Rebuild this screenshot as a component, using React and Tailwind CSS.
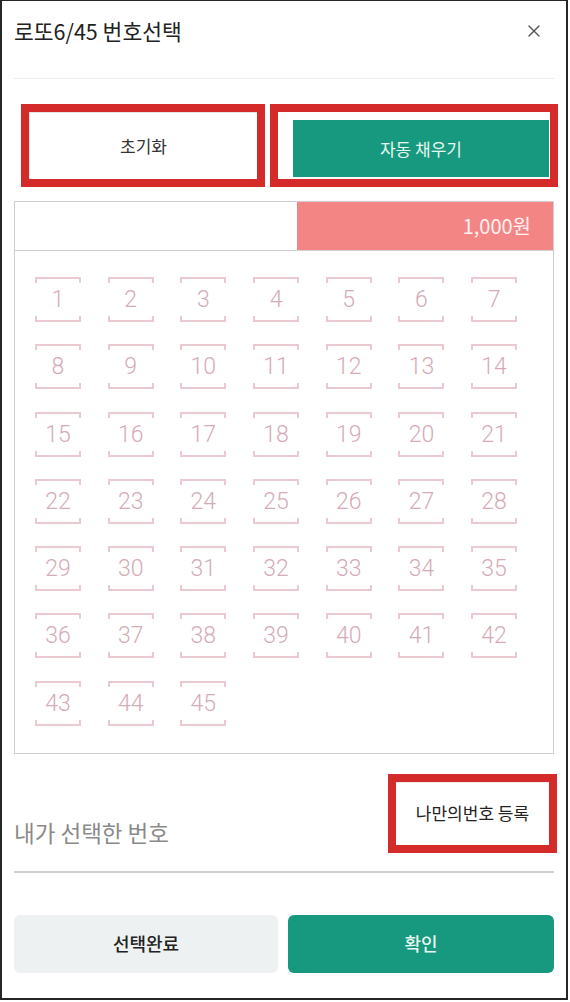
import React from 'react';
import { X } from 'lucide-react';

const numbers = Array.from({ length: 45 }, (_, i) => i + 1);

function NumberCell({ n }) {
  return (
    <div className="flex flex-col h-[45px] w-[46px]">
      <div className="h-[6px] border-t-2 border-x-2 border-[#ebc9d1]" />
      <div className="flex-1 flex items-center justify-center text-[23px] font-light text-[#d5abb7] font-['Roboto',sans-serif] leading-none">
        {n}
      </div>
      <div className="h-[6px] border-b-2 border-x-2 border-[#ebc9d1]" />
    </div>
  );
}

export default function App() {
  return (
    <div className="w-[570px] h-[1002px] bg-white font-['Noto_Sans_CJK_KR','Noto_Sans',sans-serif]">
      <div className="w-[568px] h-[1000px] border-x-2 border-t border-b-2 border-[#262626] px-[12px] flex flex-col">
        {/* header */}
        <div className="h-[60px] flex items-center justify-between">
          <h1 className="text-[21.5px] font-normal text-[#222]">로또6/45 번호선택</h1>
          <X className="w-[20px] h-[20px] text-[#555] mr-[10px]" strokeWidth={1.6} />
        </div>
        <div className="mt-[17px] h-px bg-[#ededed]" />

        {/* reset / auto fill */}
        <div className="mt-[25px] flex pl-[7px] gap-[5px] -mr-[5px]">
          <div className="w-[244px] h-[83px] border-[8px] border-[#d42a2a] flex">
            <button className="flex-1 bg-white border-t border-l border-[#e6e6e6] text-[17px] text-[#333]">
              초기화
            </button>
          </div>
          <div className="w-[288px] h-[83px] border-[8px] border-[#d42a2a] bg-white flex pl-[15px] pt-[8px] pr-[1px] pb-[2px]">
            <button className="flex-1 bg-[#16997e] text-[17px] text-[#e8f6f1]">
              자동 채우기
            </button>
          </div>
        </div>

        {/* price bar */}
        <div className="mt-[14px] h-[50px] border border-[#d3ccd0] flex">
          <div className="w-[282px]" />
          <div className="flex-1 bg-[#f38585] flex items-center justify-end pr-[22px] text-[20px] text-[#fff2f2]">
            1,000원
          </div>
        </div>

        {/* number grid */}
        <div className="border-x border-b border-[#d3ccd0] pl-[20px] pt-[26px] pb-[27px]">
          <div className="grid grid-cols-[repeat(7,46px)] gap-x-[26.7px] gap-y-[22.3px]">
            {numbers.map((n) => (
              <NumberCell key={n} n={n} />
            ))}
          </div>
        </div>

        {/* my numbers */}
        <div className="mt-[20px] flex justify-between items-start">
          <span className="pt-[43px] text-[22.5px] leading-[30px] text-[#8a8a8a]">내가 선택한 번호</span>
          <div className="w-[169px] h-[79px] border-[8px] border-[#d42a2a] -mr-[3px] flex">
            <button className="flex-1 bg-white border-t border-[#ececec] text-[17px] text-[#222] pb-[2px]">
              나만의번호 등록
            </button>
          </div>
        </div>
        <div className="mt-[18px] h-[2px] bg-[#cfcfcf]" />

        {/* bottom actions */}
        <div className="mt-[42px] flex gap-[10px]">
          <button className="w-[264px] h-[58px] rounded-md bg-[#edf1f1] text-[18px] font-medium text-[#222]">
            선택완료
          </button>
          <button className="flex-1 h-[58px] rounded-md bg-[#16997e] text-[18px] font-medium text-[#e8f6f1]">
            확인
          </button>
        </div>
      </div>
    </div>
  );
}
